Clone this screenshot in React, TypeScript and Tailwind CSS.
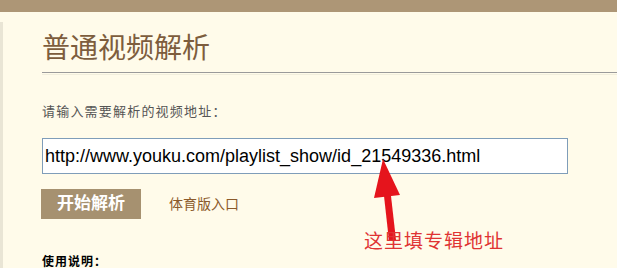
export default function App() {
  return (
    <div className="relative w-[617px] h-[268px] overflow-hidden bg-[#fffbea] font-['Liberation_Sans','Noto_Sans_CJK_SC',sans-serif]">
      <div className="h-[12px] bg-[#ad9676]" />
      <div className="flex h-[256px]">
        <div className="mt-[10px] w-[3px] bg-[#e9e5d5]" />
        <div className="flex-1 pl-[39px]">
          <h1 className="mt-[19px] text-[28px] leading-[36px] text-[#7d5d3d] font-normal">
            普通视频解析
          </h1>
          <div className="mt-[5px] h-[1px] bg-[#9a9a9a]" />
          <div className="h-[1px] mt-[1px] bg-[#f1eedd]" />
          <p className="mt-[29px] text-[13px] leading-[16px] tracking-[1.2px] text-[#555]">
            请输入需要解析的视频地址：
          </p>
          <div className="mt-[18px] w-[526px] h-[36px] border border-[#7f9db9] bg-white flex items-center pl-[2px]">
            <span className="text-[18px] text-black whitespace-nowrap">
              http://www.youku.com/playlist_show/id_21549336.html
            </span>
          </div>
          <div className="mt-[15px] flex items-center">
            <button className="ml-[-1px] w-[100px] h-[30px] bg-[#a69170] text-white font-bold text-[17px] leading-[30px]">
              开始解析
            </button>
            <a className="ml-[28px] text-[14px] text-[#8b5a2b]">体育版入口</a>
          </div>
          <p className="mt-[36px] text-[12px] font-bold tracking-[1px] text-black leading-[14px]">
            使用说明：
          </p>
        </div>
      </div>
      <svg className="absolute left-0 top-0" width="617" height="268" viewBox="0 0 617 268">
        <polygon points="383,159 374,198 400,195" fill="#e5141c" />
        <polygon points="384,196 391,196 396,240 389,241" fill="#e5141c" />
      </svg>
      <div className="absolute left-[364px] top-[230px] text-[19px] leading-[24px] tracking-[1px] text-[#e03333]">
        这里填专辑地址
      </div>
    </div>
  );
}
